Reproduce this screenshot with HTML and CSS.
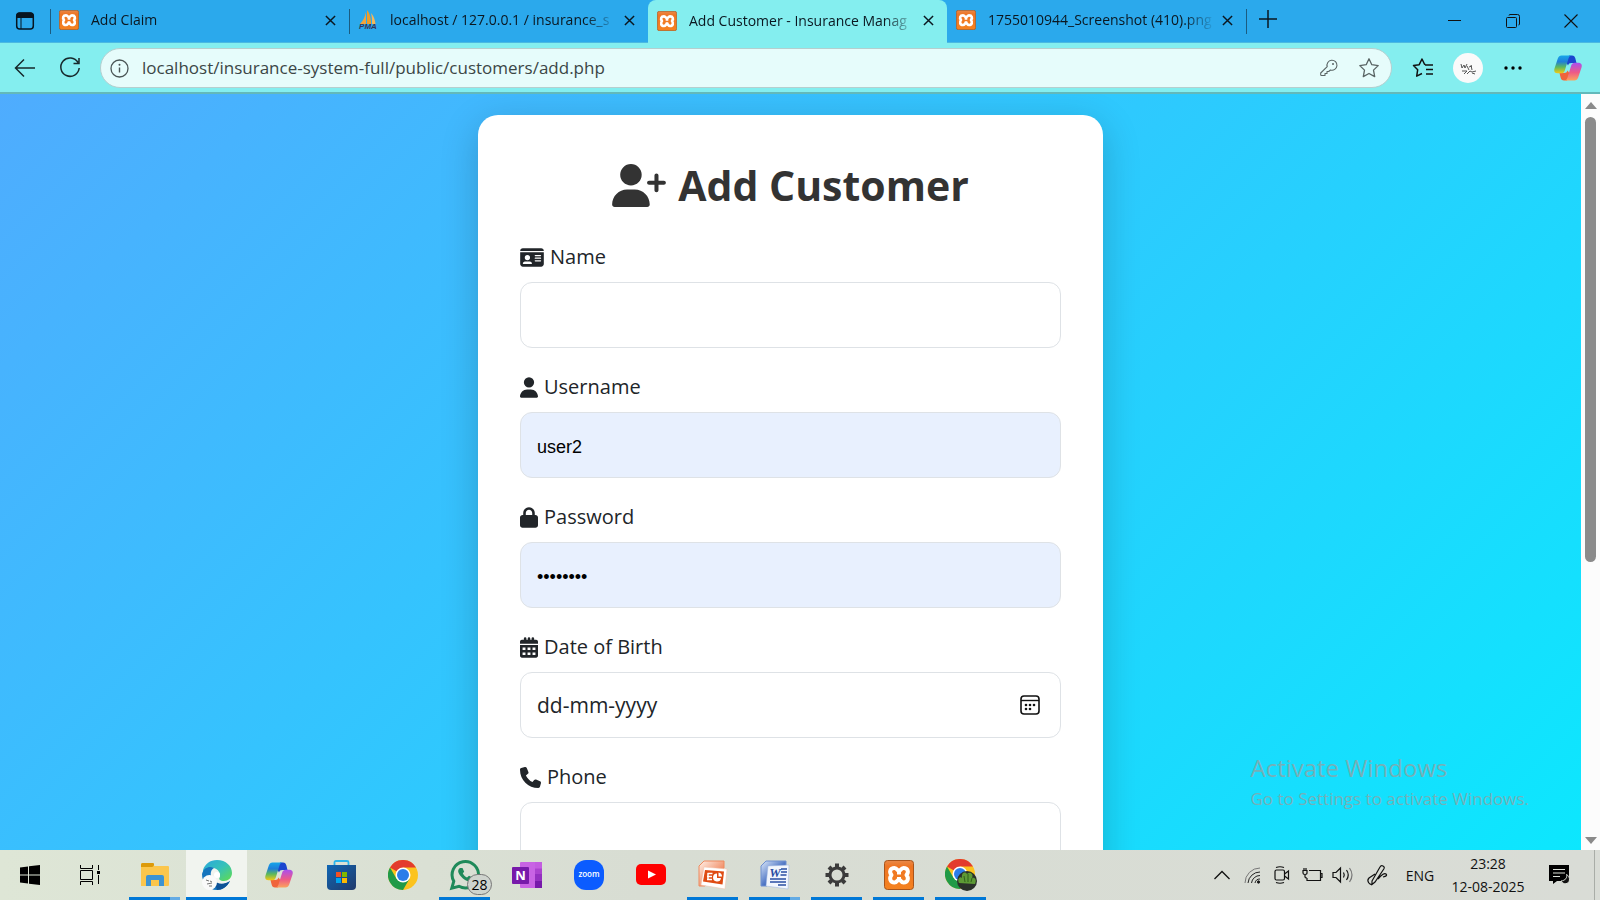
FILE: index.html
```html
<!DOCTYPE html>
<html lang="en">
<head>
<meta charset="utf-8">
<title>Add Customer - Insurance Management</title>
<link rel="stylesheet" href="styles.css">
</head>
<body>
<svg class="defs" aria-hidden="true">
  <defs>
    <linearGradient id="xg" x1="0" y1="0" x2="0" y2="1"><stop offset="0" stop-color="#e8894a"/><stop offset=".2" stop-color="#ee7524"/><stop offset="1" stop-color="#f58220"/></linearGradient>
    <linearGradient id="cpA" x1="0" y1="0" x2="0" y2="1"><stop offset="0" stop-color="#16a6ea"/><stop offset=".35" stop-color="#1f7fd8"/><stop offset=".65" stop-color="#5cb95c"/><stop offset="1" stop-color="#f6c915"/></linearGradient>
    <linearGradient id="cpB" x1="0" y1="0" x2="0" y2="1"><stop offset="0" stop-color="#a94ff0"/><stop offset=".55" stop-color="#ee5b86"/><stop offset="1" stop-color="#fba45e"/></linearGradient>
    <linearGradient id="edA" x1="0" y1="0" x2="1" y2="1"><stop offset="0" stop-color="#2aa7de"/><stop offset=".5" stop-color="#36c2b8"/><stop offset="1" stop-color="#62dc4c"/></linearGradient>
    <linearGradient id="stA" x1="0" y1="0" x2="1" y2="1"><stop offset="0" stop-color="#0f66b4"/><stop offset="1" stop-color="#223a6b"/></linearGradient>
    <linearGradient id="ppA" x1="0" y1="0" x2="1" y2="1"><stop offset="0" stop-color="#fff1e8"/><stop offset="1" stop-color="#e9571f"/></linearGradient>
    <linearGradient id="wdA" x1="0" y1="0" x2="1" y2="1"><stop offset="0" stop-color="#dbe8fa"/><stop offset=".6" stop-color="#3b66bd"/><stop offset="1" stop-color="#1b3f94"/></linearGradient>
    <symbol id="xampp" viewBox="0 0 30 30">
      <rect x=".5" y=".5" width="29" height="29" rx="3" fill="url(#xg)" stroke="#a9541b"/>
      <path d="M10.500 8C6 8 5 12 7.500 15C5 18 6 22.500 10.500 22.500C13 22.500 13.500 19.500 15 19.500S17 22.500 19.500 22.500C24 22.500 25 18 22.500 15C25 12 24 8 19.500 8C17 8 16.500 11 15 11S13 8 10.500 8Z" fill="none" stroke="#fff" stroke-width="4" stroke-linejoin="round"/>
      <path d="M15 11v3.500M15 17v3" stroke="#fff" stroke-width="4"/>
    </symbol>
    <symbol id="pma" viewBox="0 0 20 20">
      <path d="M8 2v12H2C5 11 7 7 8 2Z" fill="#f3a43b"/><path d="M9 0c3 3 4 9 4 14H9Z" fill="#f29c24"/><path d="M13 3c3 3 4 7 4.500 11H14c0-4 0-7-1-11Z" fill="#f5b65a"/>
      <text x="10" y="19" text-anchor="middle" class="pma-text">PMA</text>
    </symbol>
    <symbol id="close" viewBox="0 0 12 12"><path d="M1 1l10 10M11 1L1 11" fill="none" stroke="#0b1720" stroke-width="1.600"/></symbol>
    <symbol id="copilot" viewBox="0 0 28 28">
      <path d="M15 1.500h3c2 0 2.800 1.200 3.300 2.800L22.500 9h-5c-2 0-3 .8-3.500 2.500L12 8Z" fill="#1b45cf"/>
      <path d="M13 26.500h-3c-2 0-2.800-1-3.300-2.800L5.500 19h4.500c2 0 3-.8 3.500-2.500L16 20Z" fill="#f0643c"/>
      <path d="M7.500 1.500H18c-2 0-3 1.200-3.500 3L10.800 16.500C10.200 18.500 9 19.300 7 19.300H3.500C.5 19.300-.3 17 .5 14.500L3.800 4.500C4.500 2.500 5.700 1.500 7.500 1.500Z" fill="url(#cpA)"/>
      <path d="M20.500 26.500H10c2 0 3-1.200 3.500-3l3.700-12C17.800 9.500 19 8.700 21 8.700h3.500c3 0 3.800 2.300 3 4.800l-3.300 10c-.7 2-1.900 3-3.700 3Z" fill="url(#cpB)"/>
    </symbol>
    <symbol id="chrome" viewBox="0 0 30 30">
      <circle cx="15" cy="15" r="15" fill="#fcc31e"/>
      <path d="M15 15L2 7.500A15 15 0 0 1 28 7.500H15Z" fill="#e33b2e"/>
      <path d="M15 15l6.500 3.800L15 30A15 15 0 0 1 2 7.500L8.500 18.800Z" fill="#219a48"/>
      <circle cx="15" cy="15" r="7.500" fill="#fff"/><circle cx="15" cy="15" r="6" fill="#2b7de9"/>
    </symbol>
    <symbol id="star" viewBox="0 0 22 22"><path d="M11 1.800l2.800 5.900 6.400.9-4.700 4.500 1.200 6.500L11 16.500l-5.700 3.100 1.200-6.500L1.800 8.600l6.400-.9Z" fill="none" stroke="currentColor" stroke-width="1.300" stroke-linejoin="round"/></symbol>
  </defs>
</svg>

<header class="browser">
  <nav class="tabstrip" aria-label="Tabs">
    <button class="tab-menu" aria-label="Tab actions"><svg width="20" height="20" viewBox="0 0 20 20"><rect x="1.700" y="2" width="16.600" height="16" rx="3" fill="none" stroke="#071520" stroke-width="1.500"/><path d="M1.500 7V4.500a3 3 0 0 1 3-3h11a3 3 0 0 1 3 3V7Z" fill="#071520"/><path d="M6 7v11" stroke="#071520" stroke-width="1"/></svg></button>
    <div class="tab"><svg class="favicon"><use href="#xampp"/></svg><a class="tab-title" href="#claim">Add Claim</a><button class="tab-close" aria-label="Close tab"><svg><use href="#close"/></svg></button></div>
    <div class="tab divided"><svg class="favicon"><use href="#pma"/></svg><a class="tab-title" href="#pma-tab">localhost / 127.0.0.1 / insurance_s</a><button class="tab-close" aria-label="Close tab"><svg><use href="#close"/></svg></button></div>
    <div class="tab active"><svg class="favicon"><use href="#xampp"/></svg><a class="tab-title" href="#customer">Add Customer - Insurance Manag</a><button class="tab-close" aria-label="Close tab"><svg><use href="#close"/></svg></button></div>
    <div class="tab"><svg class="favicon"><use href="#xampp"/></svg><a class="tab-title" href="#shot">1755010944_Screenshot (410).png</a><button class="tab-close" aria-label="Close tab"><svg><use href="#close"/></svg></button></div>
    <button class="new-tab" aria-label="New tab"><svg width="18" height="18" viewBox="0 0 18 18"><path d="M9 0v18M0 9h18" stroke="#0b1720" stroke-width="1.500"/></svg></button>
    <div class="window-buttons">
      <button aria-label="Minimize"><svg width="14" height="14" viewBox="0 0 14 14"><path d="M0 6.500h13" stroke="#111"/></svg></button>
      <button aria-label="Restore"><svg width="14" height="14" viewBox="0 0 14 14"><rect x=".5" y="3.500" width="10" height="10" rx="1" fill="none" stroke="#111"/><path d="M3 1.500Q3 .5 4 .5h7.500a2 2 0 0 1 2 2V10q0 1-1 1" fill="none" stroke="#111"/></svg></button>
      <button aria-label="Close"><svg width="14" height="14" viewBox="0 0 14 14"><path d="M.5.5l13 13M13.500.5l-13 13" stroke="#111" stroke-width="1.100"/></svg></button>
    </div>
  </nav>
  <div class="toolbar">
    <button aria-label="Back"><svg width="22" height="20" viewBox="0 0 22 20"><path d="M21 10H1.500M10 1.500L1.500 10l8.500 8.500" fill="none" stroke="#16282b" stroke-width="1.500"/></svg></button>
    <button aria-label="Refresh"><svg width="22" height="22" viewBox="0 0 22 22"><path d="M19 5.500A9.200 9.200 0 1 0 20.200 11M20 1v5.500h-5.500" fill="none" stroke="#16282b" stroke-width="1.500"/></svg></button>
    <div class="address">
      <svg width="19" height="19" viewBox="0 0 19 19"><circle cx="9.500" cy="9.500" r="8.500" fill="none" stroke="#4a5555" stroke-width="1.300"/><path d="M9.500 8.500v5" stroke="#4a5555" stroke-width="1.400"/><circle cx="9.500" cy="5.800" r="1" fill="#4a5555"/></svg>
      <input class="url" aria-label="Address" value="localhost/insurance-system-full/public/customers/add.php">
      <button aria-label="Saved passwords"><svg width="18" height="18" viewBox="0 0 18 18"><path d="M7.200 7.700A5 5 0 1 1 10.500 11L8.700 12.500H7v2H5v2H1.500q-.8 0-.8-.8V14Z" fill="none" stroke="#596464" stroke-width="1.100" stroke-linejoin="round"/><circle cx="13" cy="5" r="1" fill="#596464"/></svg></button>
      <button class="grey" aria-label="Add to favourites"><svg width="22" height="22"><use href="#star"/></svg></button>
    </div>
    <div class="tools">
      <button aria-label="Favourites"><svg width="22" height="22" viewBox="0 0 22 22"><path d="M13.500 7.500L12.500 7.300 10 2 7.200 7.700l-5.700.8 4.200 4.200-1 6.500L10 16.500M13 8h8M14 12.500h7M14 17h7" fill="none" stroke="#111" stroke-width="1.500" stroke-linejoin="round"/></svg></button>
      <button aria-label="Profile"><svg width="30" height="30" viewBox="0 0 30 30"><circle cx="15" cy="15" r="15" fill="#fafafa"/><path d="M8 11l1 4 2-3 1 3 2-4M14 13l2 4M16 14l3-1M18 12l1 5M9 18h5l-3 3M14 21l3-3 2 1 4-1M19 20l3 1" fill="none" stroke="#555"/></svg></button>
      <button aria-label="Settings and more"><svg width="18" height="4" viewBox="0 0 18 4"><circle cx="2" cy="2" r="1.700"/><circle cx="9" cy="2" r="1.700"/><circle cx="16" cy="2" r="1.700"/></svg></button>
      <button class="assistant" aria-label="Copilot"><svg width="28" height="28"><use href="#copilot"/></svg></button>
    </div>
  </div>
</header>

<div class="viewport">
  <main class="page">
    <form class="card">
      <h1><svg width="54" height="43" viewBox="0 0 640 512"><path d="M96 128a128 128 0 1 1 256 0A128 128 0 1 1 96 128zM0 482.300C0 383.800 79.800 304 178.300 304h91.400C368.200 304 448 383.800 448 482.300c0 16.400-13.300 29.700-29.700 29.700H29.700C13.300 512 0 498.700 0 482.300zM504 312V248H440c-13.300 0-24-10.700-24-24s10.700-24 24-24h64V136c0-13.300 10.700-24 24-24s24 10.700 24 24v64h64c13.300 0 24 10.700 24 24s-10.700 24-24 24H552v64c0 13.300-10.700 24-24 24s-24-10.700-24-24z"/></svg>Add Customer</h1>
      <div class="field">
        <label for="name"><svg width="24" height="21" viewBox="0 0 576 512"><path d="M0 96l576 0c0-35.300-28.700-64-64-64L64 32C28.700 32 0 60.700 0 96zm0 32L0 416c0 35.300 28.700 64 64 64l448 0c35.300 0 64-28.700 64-64l0-288L0 128zM64 405.300c0-29.500 23.900-53.300 53.300-53.300l117.300 0c29.500 0 53.300 23.900 53.300 53.300c0 5.900-4.800 10.700-10.700 10.700L74.700 416c-5.900 0-10.700-4.800-10.700-10.700zM176 192a64 64 0 1 1 0 128 64 64 0 1 1 0-128zm176 16c0-8.800 7.200-16 16-16l128 0c8.800 0 16 7.200 16 16s-7.200 16-16 16l-128 0c-8.800 0-16-7.200-16-16zm0 64c0-8.800 7.200-16 16-16l128 0c8.800 0 16 7.200 16 16s-7.200 16-16 16l-128 0c-8.800 0-16-7.200-16-16zm0 64c0-8.800 7.200-16 16-16l128 0c8.800 0 16 7.200 16 16s-7.200 16-16 16l-128 0c-8.800 0-16-7.200-16-16z" fill-rule="evenodd"/></svg>Name</label>
        <input class="control" id="name" type="text">
      </div>
      <div class="field">
        <label for="username"><svg width="18" height="21" viewBox="0 0 448 512"><path d="M224 256A128 128 0 1 0 224 0a128 128 0 1 0 0 256zm-45.700 48C79.800 304 0 383.800 0 482.300C0 498.700 13.300 512 29.700 512H418.300c16.400 0 29.700-13.300 29.700-29.700C448 383.800 368.200 304 269.700 304H178.300z"/></svg>Username</label>
        <input class="control autofilled" id="username" type="text" value="user2">
      </div>
      <div class="field">
        <label for="password"><svg width="18" height="21" viewBox="0 0 448 512"><path d="M144 144v48H304V144c0-44.200-35.800-80-80-80s-80 35.800-80 80zM80 192V144C80 64.500 144.500 0 224 0s144 64.500 144 144v48h16c35.300 0 64 28.700 64 64V448c0 35.300-28.700 64-64 64H64c-35.300 0-64-28.700-64-64V256c0-35.300 28.700-64 64-64H80z" fill-rule="evenodd"/></svg>Password</label>
        <input class="control autofilled" id="password" type="password" value="password">
      </div>
      <div class="field">
        <label for="dob"><svg width="18" height="21" viewBox="0 0 448 512"><path d="M96 32a32 32 0 0 1 64 0v32h32V32a32 32 0 0 1 64 0v32h32V32a32 32 0 0 1 64 0v32h48c26.500 0 48 21.500 48 48v48H0v-48c0-26.500 21.500-48 48-48h48zM0 192h448v272c0 26.500-21.500 48-48 48H48c-26.500 0-48-21.500-48-48zM64 256v64h72v-64zm124 0v64h72v-64zm124 0v64h72v-64zM64 380v64h72v-64zm124 0v64h72v-64zm124 0v64h72v-64z" fill-rule="evenodd"/></svg>Date of Birth</label>
        <div class="control date">
          <input id="dob" type="text" placeholder="dd-mm-yyyy">
          <button type="button" aria-label="Open calendar"><svg width="20" height="20" viewBox="0 0 20 20"><rect x="1" y="1" width="18" height="18" rx="3" fill="none" stroke="#111" stroke-width="1.600"/><path d="M1 5.500h18" stroke="#111" stroke-width="1.400"/><g fill="#111"><circle cx="6" cy="10" r="1.300"/><circle cx="10" cy="10" r="1.300"/><circle cx="14" cy="10" r="1.300"/><circle cx="6" cy="14" r="1.300"/><circle cx="10" cy="14" r="1.300"/></g></svg></button>
        </div>
      </div>
      <div class="field">
        <label for="phone"><svg width="21" height="21" viewBox="0 0 512 512"><path d="M164.900 24.600c-7.700-18.600-28-28.500-47.400-23.200l-88 24C12.100 30.200 0 46 0 64C0 311.400 200.600 512 448 512c18 0 33.800-12.100 38.600-29.500l24-88c5.300-19.400-4.600-39.700-23.200-47.400l-96-40c-16.300-6.800-35.200-2.100-46.300 11.600L304.700 368C234.300 334.700 177.300 277.700 144 207.300L193.300 167c13.700-11.200 18.400-30 11.600-46.300l-40-96z"/></svg>Phone</label>
        <input class="control" id="phone" type="tel">
      </div>
    </form>
  </main>
  <div class="scrollbar"><i class="arrow up"></i><i class="thumb"></i><i class="arrow down"></i></div>
  <aside class="watermark"><p class="big">Activate Windows</p><p>Go to Settings to activate Windows.</p></aside>
</div>

<footer class="taskbar">
  <button class="sys" aria-label="Start"><svg width="20" height="20" viewBox="0 0 20 20"><path d="M0 2.600L8 1.500V9.500H0ZM9 1.300L20 0V9.500H9ZM0 10.500H8V18.500L0 17.400ZM9 10.500H20V20L9 18.700Z"/></svg></button>
  <button class="sys" aria-label="Task view"><svg width="20" height="20" viewBox="0 0 20 20"><path d="M.5 0v3.500h12V0M.5 20v-3.500h12V20M.5 5.500h12v9H.5ZM18.500 0v5M18.500 10v9" fill="none" stroke="#000"/><rect x="17" y="6" width="3" height="3"/></svg></button>
  <div class="apps">
    <button class="app open stacked" aria-label="File Explorer"><svg width="28" height="24" viewBox="0 0 28 24"><path d="M0 1.500Q0 0 1.500 0H11l2.500 3H27q1 0 1 1v18q0 1-1 1H0Z" fill="#fbc64c"/><path d="M0 1.500Q0 0 1.500 0H12q1.500 0 1 2t-2 2H0Z" fill="#dc9a0b"/><path d="M5 23V14q0-2 2-2h14q2 0 2 2v9h-5v-6h-8v6Z" fill="#3c93d2"/></svg></button>
    <button class="app open current" aria-label="Edge"><svg width="30" height="30" viewBox="0 0 30 30"><path d="M1 10C3 4 8 0 15 0c9 0 15 6 15 13 0 5-4 8-8 8-4 0-6-2-4-4 1-6-5-10-9-9-4 0-7 2-8 6Z" fill="url(#edA)"/><path d="M0 14C2 7 8 6 12 8c-4 2-5 9 1 14 5 4 11 2 15-1-3 6-8 9-13 9C6 30 0 23 0 14Z" fill="#1574bd"/><path d="M12 19c3 6 10 6 16 2-3 6-8 9-13 9Z" fill="#0d5297"/><circle cx="7.500" cy="22.500" r="7.500" fill="#fafafa"/><circle cx="15" cy="15" r="3" fill="#fff"/><path d="M4 20l3 1M5 24l5-1M8 21l2 1M7 26l3 0" stroke="#777"/></svg></button>
    <button class="app" aria-label="Copilot"><svg width="28" height="28"><use href="#copilot"/></svg></button>
    <button class="app" aria-label="Store"><svg width="30" height="30" viewBox="0 0 30 30"><path d="M8.500 7V2.500Q8.500 1 10 1h11q1.500 0 1.500 1.500V7" fill="none" stroke="#2bb5ec" stroke-width="1.800"/><path d="M1 5h29v21q0 4-4 4H5q-4 0-4-4Z" fill="url(#stA)"/><path d="M10 12h5v5h-5Z" fill="#f25022"/><path d="M16 12h5v5h-5Z" fill="#7fba00"/><path d="M10 18h5v5h-5Z" fill="#00a4ef"/><path d="M16 18h5v5h-5Z" fill="#ffb900"/></svg></button>
    <button class="app" aria-label="Chrome"><svg width="30" height="30"><use href="#chrome"/></svg></button>
    <button class="app open" aria-label="WhatsApp"><svg width="30" height="30" viewBox="0 0 30 30"><path d="M1.800 28.200l2-7A13.200 13.200 0 1 1 9 26.300Z" fill="none" stroke="#1f8a5a" stroke-width="3"/><path d="M10 8c-3 2-2 5 1 8.500s7 5.500 9.500 4.500 2-3.500 1-4l-2.500-1.200-2 1.700c-2-.8-3.500-2.500-4.200-4.300l1.400-1.500L12.500 8Z" fill="#1f8a5a"/></svg><span class="badge">28</span></button>
    <button class="app" aria-label="OneNote"><svg width="30" height="26" viewBox="0 0 30 26"><rect x="8" width="22" height="26" rx="1" fill="#c863e4"/><path d="M23 0h7v6.500h-7Z" fill="#c35de0"/><path d="M23 6.500h7V12h-7Z" fill="#ab42cf"/><path d="M23 12h7v7h-7Z" fill="#9430c0"/><path d="M23 19h7v7h-7Z" fill="#7719aa"/><rect y="5" width="17" height="17" rx="1" fill="#7719aa"/><text x="8.500" y="18" text-anchor="middle" class="letter">N</text></svg></button>
    <button class="app" aria-label="Zoom"><svg width="30" height="30" viewBox="0 0 30 30"><rect width="30" height="30" rx="12" fill="#0b5cff"/><text x="15" y="17" text-anchor="middle" class="zoom-text">zoom</text></svg></button>
    <button class="app" aria-label="YouTube"><svg width="30" height="22" viewBox="0 0 30 22"><rect width="30" height="21" rx="5" fill="#f00"/><path d="M12 6.500l8 4-8 4Z" fill="#fff"/></svg></button>
    <button class="app open" aria-label="PowerPoint"><svg width="28" height="28" viewBox="0 0 28 28"><path d="M5 0h20v7L6 25H0V5Z" fill="url(#ppA)" stroke="#ee8a5e"/><path d="M5 6l23 2-2 20-24-4Z" fill="#fff" stroke="#f0c0a8" stroke-width=".5"/><path d="M6 9l19 1.500-1.500 13L4 20.500Z" fill="#df4b12"/><path d="M8.500 12.500h5M8 15.500h5M8 18.500h5M9 12v7" stroke="#fff" stroke-width="1.500"/><path d="M18 12.500a4 4 0 1 0 4 4.500h-4Z" fill="#fff"/><path d="M19.500 11.500a4 4 0 0 1 3.500 4h-3.500Z" fill="#fff"/></svg></button>
    <button class="app open stacked" aria-label="Word"><svg width="28" height="28" viewBox="0 0 28 28"><path d="M5 0h20v7L6 25H0V5Z" fill="url(#wdA)" stroke="#6f90cf"/><path d="M7 5l21-1-1 24-22-3Z" fill="#f2f6fd" stroke="#9db5df" stroke-width=".5"/><path d="M20 8h6M20 11h6M19.500 14h6M9 18h16M9 21h16M17 24h8" stroke="#2a4fa2" stroke-width="1.500"/><text x="14" y="16" text-anchor="middle" class="word-text">W</text></svg></button>
    <button class="app open" aria-label="Settings"><svg width="24" height="24" viewBox="-12 -12 24 24" fill="none" stroke="#3b3b3b"><circle r="7" stroke-width="3"/><path stroke-width="4" d="M0-7.500V-11.500M0 7.500V11.500M-7.500 0H-11.500M7.500 0H11.500M5.500-5.500L8-8M-5.500 5.500L-8 8M5.500 5.500L8 8M-5.500-5.500L-8-8"/></svg></button>
    <button class="app open" aria-label="XAMPP"><svg width="30" height="30"><use href="#xampp"/></svg></button>
    <button class="app open" aria-label="Chrome profile"><svg width="32" height="32" viewBox="0 0 32 32"><use href="#chrome" width="30" height="30"/><circle cx="22" cy="22" r="10" fill="#2a302a"/><path d="M14 24c-2-4 1-7 3-5-1-5 3-7 5-4 3-3 7 0 5 4 3-1 5 2 3 6Z" fill="#5d9a35"/><path d="M19 17l1 6M23 15v8M27 19l-1 4" stroke="#2f601b"/></svg></button>
  </div>
  <div class="tray">
    <button aria-label="Hidden icons"><svg width="16" height="10" viewBox="0 0 16 10"><path d="M.5 9L8 1.500 15.500 9" fill="none" stroke="#111" stroke-width="1.300"/></svg></button>
    <button aria-label="Network"><svg width="17" height="17" viewBox="0 0 17 17" fill="none" stroke="#222"><path d="M1 16A15 15 0 0 1 16 1" stroke="#777"/><path d="M4 16A12 12 0 0 1 16 5M7.500 16A8.500 8.500 0 0 1 16 8.500M11 16a5 5 0 0 1 5-4"/><circle cx="14.500" cy="15" r="1.200" fill="#111"/></svg></button>
    <button aria-label="Meet now"><svg width="16" height="18" viewBox="0 0 16 18" fill="none" stroke="#111" stroke-width="1.200"><rect x="1" y="4" width="9.500" height="10" rx="1.500"/><path d="M10.500 8L14.500 5v8l-4-3M2 1.500q4-1.500 8 0M2 16.500q4 1.500 8 0"/></svg></button>
    <button aria-label="Battery"><svg width="21" height="14" viewBox="0 0 21 14" fill="none" stroke="#111" stroke-width="1.200"><path d="M7 2.500h11.500v10H5V10M18.500 5.500H20v4h-1.500M1 2.500v2.500q0 1.500 2 1.500T5 5V2.500ZM2 0v2M4 0v2M3 6.500V9q0 1 2 1"/></svg></button>
    <button aria-label="Volume"><svg width="21" height="18" viewBox="0 0 21 18" fill="none" stroke="#111" stroke-width="1.200"><path d="M1 6.500h3L8.500 2v14L4 11.500H1ZM11.500 6.500q1.500 2.500 0 5M14.500 4q3.500 5 0 10"/><path d="M17.500 2q5 7 0 14" stroke="#777"/></svg></button>
    <button class="pen" aria-label="Pen menu"><svg width="20" height="20" viewBox="0 0 20 20" fill="none" stroke="#111" stroke-width="1.200"><path d="M5 16l8-14q1-2 3-1t.8 3L8 17l-3 2.500ZM8 9q-3 2-6 4-2 2-.5 4.500T5 19M11 14q6-7 8-5t-3 3"/></svg></button>
    <button class="lang">ENG</button>
    <button class="clock"><span>23:28</span><span>12-08-2025</span></button>
    <button class="notify" aria-label="Notifications"><svg width="21" height="20" viewBox="0 0 21 20"><path d="M0 0h20v16H8l-4 3v-3H0Z"/><path d="M4 4.500h12M4 8h12M4 11.500h7" stroke="#dbe0d8" stroke-width="1.200"/><path d="M17.500 9.500c1 3-1 6-5.500 6.500 2 4 8 3.500 8.500-1 .2-2.500-1-4.500-3-5.500Z" fill="#111" stroke="#dbe0d8"/></svg></button>
    <i class="desktop-edge"></i>
  </div>
</footer>
</body>
</html>
```
FILE: styles.css
```css
* { box-sizing: border-box; }
body {
  margin: 0;
  height: 100vh;
  display: flex;
  flex-direction: column;
  overflow: hidden;
  font-family: "Open Sans", "Noto Sans", sans-serif;
  color: #212529;
}
button {
  border: 0;
  padding: 0;
  background: none;
  color: inherit;
  font: inherit;
  display: flex;
  align-items: center;
  justify-content: center;
}
input { font: inherit; border: 0; outline: 0; background: none; min-width: 0; }
svg { display: block; flex: none; overflow: visible; }
.defs { position: absolute; width: 0; height: 0; }

/* Browser frame */
.browser { flex: none; background: #84eeef; border-bottom: 2px solid #63b9ba; }
.tabstrip {
  height: 43px;
  display: flex;
  background: #2ba9ec;
  border-bottom: 1px solid #4bb9e2;
}
.tab-menu { width: 50px; }
.tab {
  position: relative;
  flex: 0 1 299px;
  min-width: 0;
  display: flex;
  align-items: center;
  padding: 0 9px 2px 9px;
}
.tab:nth-child(2)::before, .divided::before, .new-tab::before {
  content: "";
  position: absolute;
  left: 0;
  top: 9px;
  height: 25px;
  width: 1px;
  background: #1b5c80;
}
.tab.active { background: #84eeef; border-radius: 8px 8px 0 0; height: 43px; }
.favicon { width: 20px; height: 20px; }
.tab-title {
  flex: 1;
  min-width: 0;
  margin: 0 0 0 12px;
  overflow: hidden;
  white-space: nowrap;
  font-size: 14px;
  line-height: 20px;
  color: #0b1720;
  text-decoration: none;
  mask-image: linear-gradient(to right, #000 calc(100% - 34px), transparent calc(100% - 2px));
}
.tab-close { width: 20px; height: 20px; }
.tab-close svg { width: 11px; height: 11px; }
.new-tab { position: relative; width: 44px; padding-bottom: 4px; }
.window-buttons { margin-left: auto; display: flex; }
.window-buttons button { width: 58px; }

.toolbar { height: 49px; display: flex; align-items: center; padding-left: 2px; }
.toolbar > button { width: 45px; height: 40px; }
.address {
  flex: 1;
  height: 40px;
  margin: 1px 0 0 8px;
  padding: 0 9px;
  display: flex;
  align-items: center;
  background: #e6fcfb;
  border: 1px solid #b5cfcf;
  border-radius: 20px;
}
.url { flex: 1; margin-left: 13px; padding: 0 0 2px; font-size: 17px; color: #3b4646; }
.address button { width: 40px; height: 30px; }
.address button:last-child { margin-right: -7px; }
.grey { color: #596464; }
.tools { display: flex; align-items: center; padding-left: 8px; }
.tools button { width: 45px; height: 40px; }
.tools .assistant { width: 65px; }

/* Page */
.viewport { position: relative; flex: 1; min-height: 0; display: flex; overflow: hidden; }
.page {
  flex: 1;
  padding: 21px 0;
  overflow: hidden;
  background: linear-gradient(135deg, #4facfe, #0ce7fe);
}
.card {
  width: 100%;
  max-width: 625px;
  margin: 0 auto;
  padding: 42px 42px 60px;
  border-radius: 20px;
  background: #fff;
  box-shadow: 0 10px 38px rgba(0, 0, 0, .2);
}
.card h1 {
  display: flex;
  align-items: center;
  justify-content: center;
  gap: 12px;
  margin: 0 0 29px;
  font-size: 41px;
  line-height: 56px;
  font-weight: 700;
  color: #333;
  fill: #333;
}
.field { margin-bottom: 24px; }
.field label {
  display: flex;
  align-items: center;
  gap: 6px;
  margin-bottom: 10px;
  font-size: 20px;
  line-height: 30px;
  fill: #212529;
}
.control {
  display: block;
  width: 100%;
  height: 66px;
  padding: 0 16px;
  border: 1px solid #dee2e6;
  border-radius: 12px;
  background: #fff;
}
.autofilled {
  padding-top: 5px;
  background: #e8f0fe;
  color: #000;
  font-family: "Liberation Sans", Arial, sans-serif;
  font-size: 18px;
}
.date { display: flex; align-items: center; padding-right: 20px; }
.date input { flex: 1; padding: 0; font-size: 21px; color: #212529; }
.date input::placeholder { color: #212529; opacity: 1; }

.scrollbar {
  flex: none;
  width: 19px;
  padding: 8px 0 6px;
  display: flex;
  flex-direction: column;
  align-items: center;
  background: #fcfcfc;
}
.arrow { border: 6px solid transparent; }
.up { border-top: 0; border-bottom: 7px solid #8a8a8a; }
.down { border-bottom: 0; border-top: 7px solid #8a8a8a; margin-top: auto; }
.thumb { width: 11px; height: 60%; margin-top: 8px; border-radius: 6px; background: #8b8b8b; }

.watermark { position: absolute; right: 71px; bottom: 36px; color: rgba(150, 160, 160, .75); }
.watermark p { margin: 0; font-size: 17px; line-height: 30px; }
.watermark .big { font-size: 24px; line-height: 32px; }

/* Taskbar */
.taskbar {
  flex: none;
  height: 50px;
  display: flex;
  background: linear-gradient(to right, #dee6d6, #d8ddd3 40%, #d9dcd6);
}
.sys { width: 60px; }
.apps { display: flex; margin-left: 4px; }
.app { position: relative; width: 62px; border: solid transparent; border-width: 0 1px 0 0; background-clip: padding-box; }
.app.open::after {
  content: "";
  position: absolute;
  left: 5px;
  right: 5px;
  bottom: 0;
  height: 3px;
  background: #0078d7;
}
.app.stacked::after { background: linear-gradient(to right, #0078d7 80%, #64abe4 80%); }
.app.current { background-color: #f1f4ef; }
.app.current::after { left: 0; right: 0; }
.badge {
  position: absolute;
  left: 33px;
  top: 24px;
  width: 25px;
  height: 21px;
  border: 1px solid #777;
  border-radius: 11px;
  background: #cfd4ce;
  color: #000;
  font-size: 14px;
  line-height: 19px;
}
.tray { margin-left: auto; display: flex; align-items: center; color: #111; font-size: 14px; }
.tray button { width: 30px; height: 50px; }
.tray .pen { width: 40px; }
.tray .lang { width: 46px; }
.tray .clock { width: 90px; margin-right: 13px; flex-direction: column; line-height: 23px; }
.tray .notify { width: 26px; margin-right: 22px; }
.desktop-edge { width: 6px; height: 50px; border-left: 1px solid #a9ada7; }

/* Lettering in the icons */
.pma-text { font: italic 700 8px "Liberation Sans", sans-serif; fill: #3a3555; }
.letter { font: 700 13px "Open Sans", sans-serif; fill: #fff; }
.zoom-text { font: 600 8px "Open Sans", sans-serif; fill: #fff; }
.word-text { font: italic 700 13px "Liberation Serif", serif; fill: #2a4fa2; }
```
